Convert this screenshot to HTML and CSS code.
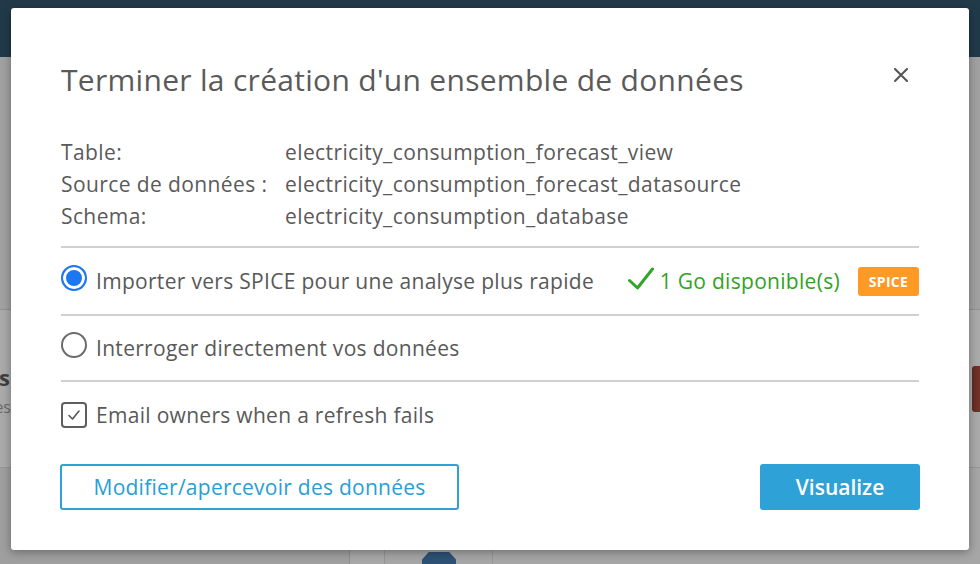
FILE: index.html
```html
<!DOCTYPE html>
<html lang="fr">
<head>
<meta charset="utf-8">
<title>Terminer la création d'un ensemble de données</title>
<link rel="stylesheet" href="styles.css">
</head>
<body>
<div class="app">
  <header class="topbar"></header>
  <main class="backdrop">
    <section class="bg-band"></section>
    <section class="bg-cards">
      <div class="bg-card bg-card-left">
        <div class="bg-card-title">Analyses</div>
        <div class="bg-card-sub">Récentes</div>
      </div>
      <div class="bg-card-gap"></div>
      <div class="bg-card bg-card-right">
        <div class="bg-tag"></div>
      </div>
    </section>
    <section class="bg-lower">
      <div class="bg-cell bg-cell-a"></div>
      <div class="bg-cell bg-cell-b"></div>
      <div class="bg-cell bg-cell-c"><div class="bg-hex"></div></div>
      <div class="bg-cell bg-cell-d"></div>
    </section>
  </main>

  <div class="modal" role="dialog" aria-labelledby="dlg-title">
    <div class="modal-head">
      <h1 class="modal-title" id="dlg-title">Terminer la création d'un ensemble de données</h1>
      <button class="close-btn" aria-label="Fermer">
        <svg width="14" height="14" viewBox="0 0 14 14"><path d="M1 1 L13 13 M13 1 L1 13" stroke="#545454" stroke-width="2" stroke-linecap="round"/></svg>
      </button>
    </div>

    <dl class="info">
      <dt>Table:</dt><dd>electricity_consumption_forecast_view</dd>
      <dt>Source de données :</dt><dd>electricity_consumption_forecast_datasource</dd>
      <dt>Schema:</dt><dd>electricity_consumption_database</dd>
    </dl>

    <div class="divider"></div>
    <div class="option option-first">
      <span class="radio radio-on"></span>
      <span class="option-label">Importer vers SPICE pour une analyse plus rapide</span>
      <span class="status">
        <svg class="ok-icon" width="26" height="24" viewBox="0 0 26 24"><path d="M1.5 13.5 L9.5 21 L24.5 2" fill="none" stroke="#33a526" stroke-width="3" stroke-linecap="round" stroke-linejoin="round"/></svg>
        <span class="status-text">1 Go disponible(s)</span>
        <span class="badge">SPICE</span>
      </span>
    </div>
    <div class="divider"></div>
    <div class="option option-second">
      <span class="radio"></span>
      <span class="option-label">Interroger directement vos données</span>
    </div>
    <div class="divider"></div>

    <label class="check-row">
      <span class="checkbox">
        <svg width="14" height="12" viewBox="0 0 14 12"><path d="M2 6.5 L5.5 10 L12 2" fill="none" stroke="#555" stroke-width="1.6" stroke-linecap="round" stroke-linejoin="round"/></svg>
      </span>
      <span class="option-label">Email owners when a refresh fails</span>
    </label>

    <div class="footer">
      <button class="btn btn-outline">Modifier/apercevoir des données</button>
      <button class="btn btn-primary">Visualize</button>
    </div>
  </div>
</div>
</body>
</html>
```

FILE: styles.css
```css
html, body {
  margin: 0;
  padding: 0;
}

body {
  width: 980px;
  height: 564px;
  overflow: hidden;
  font-family: "Open Sans", "Liberation Sans", sans-serif;
  background: #a3a3a3;
}

.app {
  position: relative;
  width: 980px;
  height: 564px;
  display: flex;
  flex-direction: column;
}

/* ---------- dimmed background page ---------- */
.topbar {
  height: 57px;
  flex: 0 0 57px;
  background: #213a4a;
}

.backdrop {
  flex: 1;
  display: flex;
  flex-direction: column;
}

.bg-band {
  height: 253px;
  flex: 0 0 253px;
  background: #a1a1a1;
  border-bottom: 1px solid #929292;
  box-sizing: border-box;
}

.bg-cards {
  height: 158px;
  flex: 0 0 158px;
  display: flex;
  background: #a6a6a6;
  border-bottom: 1px solid #969696;
  box-sizing: border-box;
}

.bg-card {
  background: #aaaaaa;
  overflow: hidden;
}

.bg-card-left {
  width: 11px;
  direction: rtl;
  padding-top: 52px;
  box-sizing: border-box;
}

.bg-card-title {
  white-space: nowrap;
  font-size: 22px;
  font-weight: 700;
  line-height: 30px;
  color: #3e3e3e;
  margin-right: 1px;
}

.bg-card-sub {
  white-space: nowrap;
  font-size: 16px;
  line-height: 26px;
  color: #6a6a6a;
  margin-top: 2px;
}

.bg-card-gap {
  flex: 1;
}

.bg-card-right {
  width: 11px;
  padding-top: 56px;
  box-sizing: border-box;
}

.bg-tag {
  margin-left: 3px;
  width: 12px;
  height: 46px;
  border-radius: 3px 0 0 3px;
  background: linear-gradient(90deg, #622a22, #7d3a30);
}

.bg-lower {
  flex: 1;
  display: flex;
  background: #a4a4a4;
}

.bg-cell {
  box-sizing: border-box;
}

.bg-cell-a {
  width: 350px;
  border-right: 1px solid #8e8e8e;
  background: #9f9f9f;
}

.bg-cell-b {
  width: 35px;
  border-right: 1px solid #959595;
  background: #a8a8a8;
}

.bg-cell-c {
  width: 108px;
  border-right: 1px solid #979797;
  background: #a6a6a6;
  padding: 84px 0 0 37px;
}

.bg-hex {
  width: 34px;
  height: 30px;
  background: #2d5174;
  clip-path: polygon(20% 0, 80% 0, 100% 25%, 100% 100%, 0 100%, 0 25%);
}

.bg-cell-d {
  flex: 1;
  background: #a6a6a6;
}

/* ---------- modal ---------- */
.modal {
  position: absolute;
  left: 11px;
  top: 8px;
  width: 958px;
  box-sizing: border-box;
  padding: 52px 50px 40px;
  background: #ffffff;
  border-radius: 3px;
  box-shadow: 0 2px 10px rgba(0, 0, 0, 0.35);
  color: #595959;
}

.modal-head {
  display: flex;
  justify-content: space-between;
  align-items: flex-start;
  height: 40px;
}

.modal-title {
  margin: 0;
  font-size: 30px;
  line-height: 40px;
  letter-spacing: 0.3px;
  font-weight: 400;
  color: #5a5a5a;
  white-space: nowrap;
}

.close-btn {
  margin: 8px 11px 0 0;
  padding: 0;
  border: 0;
  background: none;
  width: 14px;
  height: 14px;
  display: flex;
}

.info {
  margin: 36px 0 14px;
  display: grid;
  grid-template-columns: 224px 1fr;
  font-size: 21px;
  line-height: 32px;
  letter-spacing: 0.4px;
  color: #5a5a5a;
}

.info dt,
.info dd {
  margin: 0;
  white-space: nowrap;
}

.divider {
  height: 2px;
  background: #d0d0d0;
}

.option {
  display: flex;
  align-items: center;
  gap: 9px;
}

.option-first {
  height: 66px;
}

.option-second {
  height: 64px;
}

.option-label {
  font-size: 21px;
  line-height: 28px;
  letter-spacing: 0.3px;
  color: #595959;
  white-space: nowrap;
}

.radio {
  flex: 0 0 26px;
  width: 26px;
  height: 26px;
  box-sizing: border-box;
  border-radius: 50%;
  border: 2px solid #6b6b6b;
  background: #fff;
  margin-bottom: 6px;
}

.radio-on {
  border-color: #1c78f0;
  background: #1c78f0;
  box-shadow: inset 0 0 0 3px #ffffff;
}

.status {
  margin-left: auto;
  display: flex;
  align-items: center;
}

.ok-icon {
  margin: 0 6px 4px 0;
}

.status-text {
  font-size: 21px;
  line-height: 28px;
  letter-spacing: 0.3px;
  color: #31a324;
  white-space: nowrap;
}

.badge {
  margin-left: 18px;
  width: 61px;
  height: 29px;
  display: flex;
  align-items: center;
  justify-content: center;
  background: #ff9a24;
  border-radius: 3px;
  color: #ffffff;
  font-size: 14px;
  font-weight: 700;
  letter-spacing: 0.3px;
}

.check-row {
  margin-top: 20px;
  height: 26px;
  display: flex;
  align-items: center;
  gap: 9px;
}

.checkbox {
  flex: 0 0 26px;
  width: 26px;
  height: 26px;
  box-sizing: border-box;
  border: 2px solid #5e5e5e;
  border-radius: 4px;
  display: flex;
  align-items: center;
  justify-content: center;
}

.footer {
  margin-top: 36px;
  display: flex;
  justify-content: space-between;
}

.btn {
  height: 46px;
  box-sizing: border-box;
  border-radius: 3px;
  font-family: inherit;
  font-size: 21px;
  cursor: pointer;
  white-space: nowrap;
}

.btn-outline {
  width: 399px;
  margin-left: -1px;
  background: #ffffff;
  border: 2px solid #2ea1d6;
  color: #2a9ed5;
  letter-spacing: 0.25px;
}

.btn-primary {
  width: 160px;
  margin-right: -1px;
  background: #2ea1d6;
  border: 0;
  color: #ffffff;
  font-weight: 600;
}
```
